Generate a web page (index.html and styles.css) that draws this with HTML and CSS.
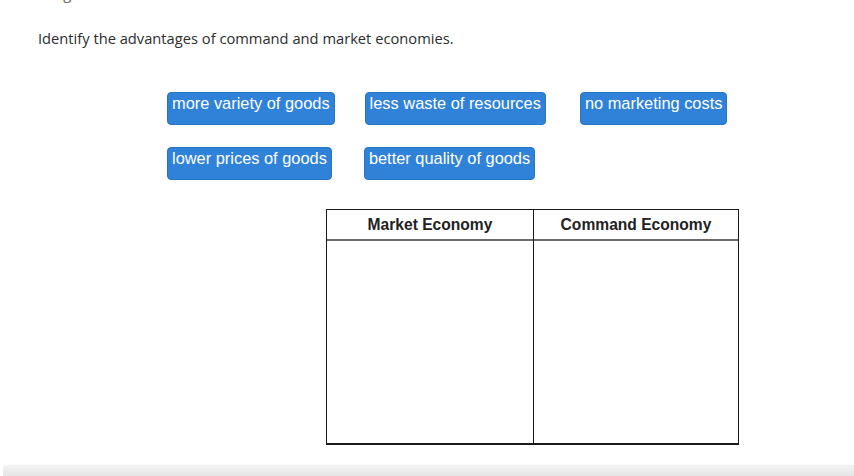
FILE: index.html
```html
<!DOCTYPE html>
<html>
<head>
<meta charset="utf-8">
<link rel="stylesheet" href="styles.css">
</head>
<body>
<div class="page">
  <p class="prev">Drag each item to the correct location.</p>
  <p class="prompt">Identify the advantages of command and market economies.</p>
  <div class="bank">
    <div class="row">
      <span class="chip">more variety of goods</span>
      <span class="chip">less waste of resources</span>
      <span class="chip chip-far">no marketing costs</span>
    </div>
    <div class="row row-2">
      <span class="chip">lower prices of goods</span>
      <span class="chip">better quality of goods</span>
    </div>
  </div>
  <div class="board">
    <div class="col col-left">
      <div class="head">Market Economy</div>
      <div class="drop"></div>
    </div>
    <div class="col">
      <div class="head">Command Economy</div>
      <div class="drop"></div>
    </div>
  </div>
</div>
<div class="footer"></div>
</body>
</html>
```
FILE: styles.css
```css
html, body {
  margin: 0;
  padding: 0;
  background: #ffffff;
  width: 854px;
  height: 476px;
  overflow: hidden;
}
.page {
  display: flow-root;
  height: 466px;
}
.prev {
  margin: 0;
  margin-top: -17px;
  padding-left: 38px;
  font-family: "Open Sans", sans-serif;
  font-size: 15px;
  line-height: 20px;
  color: #666;
}
.prompt {
  margin: 0;
  margin-top: 25px;
  padding-left: 38px;
  font-family: "Open Sans", sans-serif;
  font-size: 14.7px;
  line-height: 20px;
  color: #2e2e2e;
}
.bank {
  margin-top: 44px;
  padding-left: 167px;
  display: flex;
  flex-direction: column;
  gap: 22px;
}
.row {
  display: flex;
  gap: 30px;
}
.row-2 {
  gap: 32px;
}
.chip {
  box-sizing: border-box;
  height: 33px;
  padding: 1px 4px 0 4px;
  background: #2f82d8;
  border: 1px solid #2a74c4;
  border-radius: 4px;
  color: #ffffff;
  font-family: "Liberation Sans", Arial, sans-serif;
  font-size: 16.4px;
  line-height: 19px;
  white-space: nowrap;
}
.chip-far {
  margin-left: 4px;
}
.board {
  margin-top: 29px;
  margin-left: 326px;
  width: 413px;
  height: 236px;
  box-sizing: border-box;
  border: 1px solid #1a1a1a;
  border-bottom-width: 2px;
  display: flex;
}
.col {
  flex: 1;
  display: flex;
  flex-direction: column;
}
.col-left {
  flex: 0 0 206px;
  border-right: 1px solid #1a1a1a;
}
.head {
  height: 29px;
  border-bottom: 2px solid #6a6a6a;
  display: flex;
  align-items: center;
  justify-content: center;
  font-family: "Liberation Sans", Arial, sans-serif;
  font-weight: bold;
  font-size: 15.6px;
  color: #222;
}
.drop {
  flex: 1;
}
.footer {
  margin-left: 3px;
  height: 10px;
  border-top-left-radius: 4px;
  background: linear-gradient(#f2f2f2, #e4e4e4);
  box-shadow: 0 -1px 2px rgba(0,0,0,0.08);
}
```
